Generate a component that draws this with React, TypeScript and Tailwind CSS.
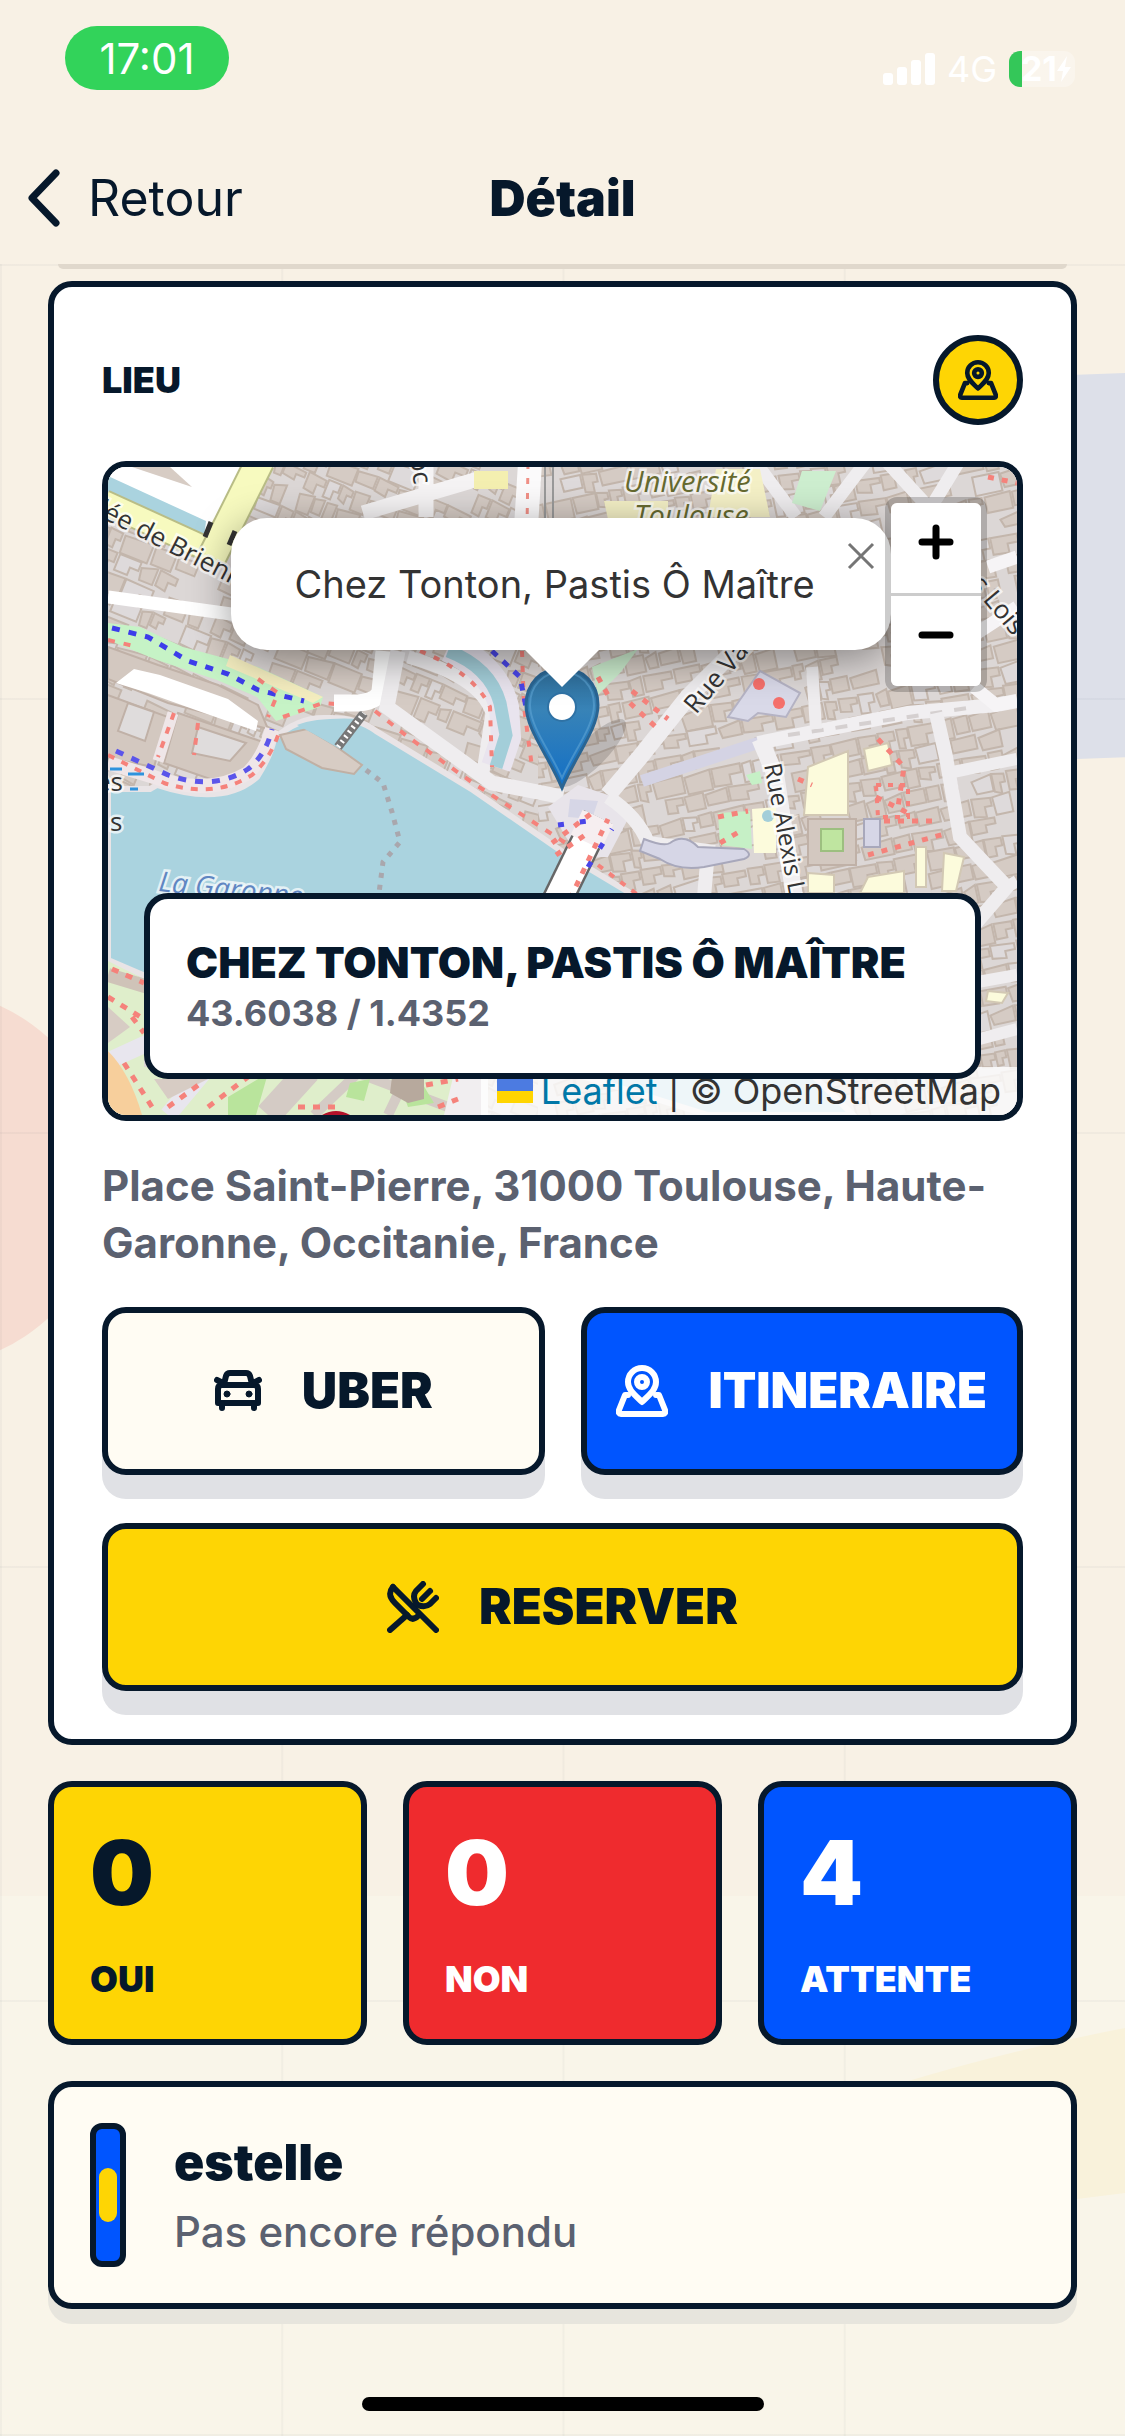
import { useState } from "react";

// Small deterministic generator, so the blocks stay the same on every render
const makeRandom = (seed: number) => () => {
  seed = (seed * 16807) % 2147483647;
  return seed / 2147483647;
};

type Block = { points: string; light: boolean };

const makeBlocks = (
  seed: number,
  x0: number,
  y0: number,
  x1: number,
  y1: number
): Block[] => {
  const rand = makeRandom(seed);
  const blocks: Block[] = [];
  for (let y = y0; y < y1; y += 21) {
    let x = x0 + rand() * 10;
    while (x < x1) {
      const w = 9 + rand() * 22;
      const h = 13 + rand() * 8;
      const cut = rand() * 5;
      if (rand() > 0.1) {
        const notch = rand() > 0.5;
        const pts = notch
          ? [
              [x, y],
              [x + w, y + cut / 2],
              [x + w, y + h / 2],
              [x + w * 0.6, y + h / 2],
              [x + w * 0.6, y + h],
              [x, y + h - cut / 2],
            ]
          : [
              [x, y + cut],
              [x + w, y],
              [x + w, y + h],
              [x + cut / 2, y + h],
            ];
        blocks.push({
          points: pts.map((p) => p.map(Math.round).join(",")).join(" "),
          light: rand() > 0.85,
        });
      }
      x += w + 1 + rand() * 2;
    }
  }
  return blocks;
};

const leftBlocks = makeBlocks(71, -60, -260, 620, 460);
const rightBlocks = makeBlocks(1234, 300, -20, 1120, 860);

const Blocks = ({ items }: { items: Block[] }) => (
  <>
    {items.map((b, i) => (
      <polygon
        key={i}
        points={b.points}
        fill={b.light ? "#dedadb" : "#d5cbc4"}
        stroke="#c3b6ac"
        strokeWidth="2"
      />
    ))}
  </>
);

const CityMap = () => (
  <svg
    viewBox="0 0 909 648"
    preserveAspectRatio="xMidYMid slice"
    className="absolute inset-0 h-full w-full"
    aria-hidden="true"
  >
    <defs>
      <clipPath id="west">
        <rect x="0" y="0" width="430" height="648" />
      </clipPath>
      <clipPath id="east">
        <rect x="430" y="0" width="479" height="648" />
      </clipPath>
      <linearGradient id="pin" x1="0" y1="0" x2="0" y2="1">
        <stop offset="0" stopColor="#2e6c97" />
        <stop offset="0.35" stopColor="#3883b7" />
        <stop offset="1" stopColor="#126fc6" />
      </linearGradient>
    </defs>

    <rect width="909" height="648" fill="#dcd7d6" />
    <g clipPath="url(#west)">
      <g transform="rotate(22)">
        <Blocks items={leftBlocks} />
      </g>
    </g>
    <g clipPath="url(#east)">
      <g transform="rotate(-12)">
        <Blocks items={rightBlocks} />
      </g>
    </g>

    {/* river */}
    <path
      d="M0 322 L42 322 L49 318 Q115 340 149 310 Q162 290 166 272 Q190 250 218 251 Q250 250 268 264 L365 323 L462 390 L522 426 L745 648 L600 648 L380 580 L35 508 L0 493 Z"
      fill="#aad3df"
      stroke="#e9e4e6"
      strokeWidth="6"
    />
    <path d="M172 268 L199 262 L226 278 L254 298 L246 307 L214 301 L178 282 Z" fill="#d7ccc4" stroke="#c0b0a4" strokeWidth="2" />
    <path d="M258 303 L275 316 L284 345 L292 375 L275 395 L271 426" stroke="#a9a7ad" strokeWidth="5" strokeDasharray="5 7" fill="none" />

    {/* north west: canal and main roads */}
    <path d="M0 0 H140 L118 62 L95 66 L0 10 Z" fill="#fff" />
    <path d="M24 0 L84 20 L62 0 Z" fill="#d7ccc4" />
    <path d="M0 9 L98 54 L96 72 L0 24 Z" fill="#aad3df" />
    <path d="M-4 35 L112 88" stroke="#b9bd86" strokeWidth="26" />
    <path d="M-4 35 L112 88" stroke="#f7fabf" strokeWidth="22" />
    <path d="M152 -6 L104 90" stroke="#b9bd86" strokeWidth="31" />
    <path d="M152 -6 L104 90" stroke="#f7fabf" strokeWidth="27" />
    <path d="M97 70 L103 55" stroke="#333" strokeWidth="5" />
    <path d="M121 78 L127 64" stroke="#333" strokeWidth="5" />
    <path d="M0 130 L130 148 L160 156" stroke="#fff" strokeWidth="13" fill="none" />
    <path d="M255 46 L370 12 M318 -6 V50" stroke="#f5f3f4" strokeWidth="15" fill="none" />
    <path d="M422 -4 L418 60" stroke="#fbfafb" strokeWidth="24" />
    <path d="M420 -4 L419 60" stroke="#f08f86" strokeWidth="3" strokeDasharray="6 9" />
    <path d="M437 0 V52 M445 0 V52" stroke="#999" strokeWidth="2" />
    <rect x="366" y="4" width="34" height="18" fill="#f4efb0" />

    {/* quay gardens */}
    <path d="M0 156 L32 160 L75 180 L150 200 L215 230 L212 240 L168 254 L149 230 L109 213 L49 193 L0 173 Z" fill="#c6f3c6" />
    <path d="M122 188 L215 230 L205 236 L118 199 Z" fill="#f5eec0" />
    <path d="M4 161 L40 170 L80 194 L120 207 L150 223 L196 234" stroke="#3d3dea" strokeWidth="5" strokeDasharray="8 9" fill="none" />
    <path d="M0 173 L30 180 M150 212 L170 226 L160 250 M175 250 L215 236 L262 240 L300 270 L365 316 L470 384" stroke="#f5827b" strokeWidth="4" strokeDasharray="7 9" fill="none" />
    <path d="M0 180 L50 198 L110 218 L150 238 L160 262 L60 236 L0 212 Z" fill="#d3c8c0" stroke="#c0b1a7" strokeWidth="2" />
    <path d="M8 216 L26 202 L52 208 L120 232 L150 254 L148 264 L96 246 L40 226 Z" fill="#fff" />
    <path d="M-6 226 L60 250 L46 300 L-6 290 Z" fill="#d3c8c0" stroke="#c0b1a7" strokeWidth="2" />
    <path d="M20 236 L46 245 L37 274 L10 264 Z" fill="#dfdcdc" stroke="#c0b1a7" strokeWidth="2" />
    <path d="M70 246 L158 276 L144 304 L108 314 L56 296 Z" fill="#d3c8c0" stroke="#c0b1a7" strokeWidth="2" />
    <path d="M90 260 L138 276 L122 294 L84 286 Z" fill="#dfdcdc" stroke="#c0b1a7" strokeWidth="2" />
    <path d="M0 296 L46 310 Q100 330 140 306 Q156 290 164 262" stroke="#efe6e8" strokeWidth="14" fill="none" />
    <path d="M8 284 L60 308 Q106 324 140 302 Q158 288 164 262" stroke="#5b55ea" strokeWidth="5" strokeDasharray="8 9" fill="none" />
    <path d="M65 246 L50 294" stroke="#efe6e8" strokeWidth="11" />
    <path d="M0 288 L56 316 Q106 332 144 308 Q164 290 172 262 M66 246 L50 290 M90 256 L86 288" stroke="#f5827b" strokeWidth="4" strokeDasharray="7 8" fill="none" />
    <path d="M2 302 H14 M20 307 H36 M22 322 H30" stroke="#2f93dd" strokeWidth="3" />

    {/* small basin and the canal branch */}
    <path d="M189 258 Q210 250 252 252 L232 282 L204 266 Z" fill="#aad3df" />
    <path d="M230 280 L256 246" stroke="#777" strokeWidth="9" />
    <path d="M230 280 L256 246" stroke="#fff" strokeWidth="5" strokeDasharray="2 4" />
    <path d="M276 184 L272 224 Q270 234 250 236 L226 236" stroke="#fff" strokeWidth="17" fill="none" />
    <path d="M290 184 L279 240 L384 316 L455 330" stroke="#efedef" strokeWidth="15" fill="none" />
    <path d="M300 190 Q372 210 384 246 L374 312" stroke="#efedef" strokeWidth="13" fill="none" />
    <path d="M340 180 Q386 200 396 240 L398 270 L388 300" stroke="#e9e4ee" strokeWidth="30" fill="none" />
    <path d="M340 184 Q382 200 392 236 L398 268 L388 300" stroke="#a3ced9" strokeWidth="13" fill="none" />
    <path d="M312 184 Q366 206 382 240 L384 300 M414 184 L416 240 L424 300" stroke="#f5827b" strokeWidth="4" strokeDasharray="6 9" fill="none" />
    <path d="M384 184 L412 210 L418 240" stroke="#4a46e8" strokeWidth="5" strokeDasharray="7 8" fill="none" />

    {/* bridge landing */}
    <path d="M440 340 L470 318 L506 330 L520 352 L500 390 L470 390 Z" fill="#e8e4ea" />
    <path d="M462 332 L490 334 L484 352 L460 350 Z" fill="#d6d6e6" />
    <path d="M448 436 L490 350" stroke="#666" strokeWidth="32" />
    <path d="M448 436 L490 350" stroke="#fff" strokeWidth="27" />
    <path d="M478 375 L490 350" stroke="#f6eef0" strokeWidth="34" />
    <path d="M444 376 L484 346 M448 388 L480 366 M462 432 L500 352" stroke="#f5827b" strokeWidth="5" strokeDasharray="6 8" />
    <path d="M480 400 L504 362 M450 358 L480 354" stroke="#4a46e8" strokeWidth="5" strokeDasharray="6 16" />
    <path d="M490 398 L530 428" stroke="#f5827b" strokeWidth="4" strokeDasharray="6 8" />

    {/* streets of the east side */}
    <path d="M500 328 L532 290 L580 230 L640 170" stroke="#efedef" strokeWidth="17" fill="none" />
    <path d="M534 314 L656 274" stroke="#d4d3e4" strokeWidth="12" />
    <path d="M650 276 L720 262 L800 246 L888 238 L909 234" stroke="#f1eff1" strokeWidth="14" fill="none" />
    <path d="M680 268 L860 241" stroke="#d5d0d0" strokeWidth="4" strokeDasharray="12 12" />
    <path d="M652 272 L668 310 L688 440" stroke="#f1eff1" strokeWidth="17" fill="none" />
    <path d="M704 200 L708 262" stroke="#efedef" strokeWidth="12" />
    <path d="M828 246 L838 290 L852 370 L899 420 L868 456" stroke="#efedef" strokeWidth="14" fill="none" />
    <path d="M840 306 L909 292 M899 420 L909 414" stroke="#efedef" strokeWidth="12" />
    <path d="M866 220 L888 238 L909 234 M866 168 L909 140 M880 100 L909 90" stroke="#f6f4f6" strokeWidth="13" fill="none" />
    <path d="M648 -4 L688 50 M757 -4 L716 50 M780 -4 L822 42 L850 -4" stroke="#efedef" strokeWidth="13" fill="none" />
    <path d="M500 330 Q530 350 540 376 L600 384 L596 430" stroke="#efedef" strokeWidth="14" fill="none" />
    <path d="M536 372 Q556 380 562 376 Q576 366 590 380 L636 382 Q646 388 636 392 L596 400 Q570 404 552 392 L532 384 Z" fill="#d6d6e6" stroke="#a8a8bb" strokeWidth="2" />
    <path d="M864 516 L909 508 M864 574 L909 562" stroke="#efedef" strokeWidth="12" />

    {/* schools, squares and gardens */}
    <path d="M608 2 H652 L662 50 H600 Z M496 34 H560 V52 H500 Z" fill="#f4f0c6" />
    <path d="M694 4 H728 L712 44 L684 36 Z" fill="#cdeecf" />
    <path d="M652 204 L692 226 L678 250 L650 246 L640 254 L620 250 Z" fill="#d9d9e8" stroke="#b5b3c4" strokeWidth="2" />
    <circle cx="651" cy="217" r="6" fill="#f5706b" />
    <circle cx="671" cy="236" r="6" fill="#f5706b" />
    <path d="M484 200 L530 182 L512 206 L490 228 Z" fill="#cdeecf" />
    <path d="M700 300 L740 284 V348 H696 Z M756 282 L780 276 L784 298 L760 304 Z M760 410 L796 404 V426 H752 Z M700 406 L726 408 V426 H700 Z M808 380 H818 V420 H808 Z M836 386 L856 390 L848 424 H834 Z M880 524 L900 526 L894 536 L878 534 Z" fill="#fcfbdc" stroke="#d2c8b4" strokeWidth="2" />
    <path d="M644 342 L668 340 V386 H646 Z" fill="#fcfbdc" />
    <path d="M610 346 L642 344 L644 382 L612 378 Z" fill="#c6f0c6" />
    <path d="M700 352 H748 V398 H700 Z" fill="#d3c8c0" stroke="#c0b1a7" strokeWidth="2" />
    <rect x="713" y="362" width="22" height="22" fill="#bfe5a0" stroke="#9dbf80" strokeWidth="2" />
    <rect x="756" y="352" width="16" height="28" fill="#d6d6e6" stroke="#a8a8bb" strokeWidth="2" />
    <circle cx="660" cy="349" r="6" fill="#a3ced9" />
    <path d="M638 308 L652 304 L654 316 L644 318 Z" fill="#c6f0c6" />
    <path d="M490 210 L502 232 M524 224 L560 252 M522 236 L550 262 M610 350 L640 344 M612 376 L636 362 M770 272 L796 300 L790 340 M768 330 L800 346 M760 388 L840 366 M776 354 L830 354 M880 10 L909 16 M690 312 L704 318" stroke="#f5827b" strokeWidth="5" strokeDasharray="6 8" fill="none" />
    <path d="M768 318 H800 V350 H770 Z" fill="none" stroke="#f5827b" strokeWidth="4" strokeDasharray="5 7" />

    {/* south west gardens */}
    <path d="M0 494 L36 512 V600 H380 V648 H0 Z" fill="#dfeecb" />
    <path d="M0 508 L40 520" stroke="#cfc3b8" strokeWidth="14" />
    <path d="M0 594 L44 574 L90 612 L60 648" stroke="#e8e6ee" strokeWidth="17" fill="none" />
    <path d="M0 584 Q22 606 34 648 H0 Z" fill="#f7cf9c" />
    <path d="M0 540 L22 560 L0 576 Z M46 612 H100 L60 632 Z" fill="#d7ccc4" />
    <path d="M160 648 L200 604" stroke="#d4cbc5" strokeWidth="26" />
    <path d="M206 648 L250 606 L340 640 M300 606 L280 648" stroke="#d4cbc5" strokeWidth="10" fill="none" />
    <path d="M242 616 L262 612 L256 634 L238 630 Z M292 618 L314 616 L326 636 L300 640 Z M120 630 L160 606 L148 648 H120 Z" fill="#b9e49c" />
    <path d="M284 610 H316 V632 L300 636 L282 626 Z" fill="#b7a99d" />
    <path d="M346 606 H380 V648 H336 Z" fill="#f1eef0" />
    <path d="M4 502 L36 516 M0 530 L36 552 M24 550 L36 566 M16 596 L44 640 M60 640 L96 614 M100 640 L140 610 M190 640 L230 640 M318 618 L350 612 M330 640 L350 632" stroke="#f5827b" strokeWidth="5" strokeDasharray="7 8" fill="none" />
    <path d="M214 648 Q228 640 242 648 Z" fill="#b3122a" />

    <g fontFamily="'Open Sans', 'Noto Sans', sans-serif" fontSize="26" fontWeight="500" stroke="#fff" strokeWidth="5" strokeOpacity="0.7" paintOrder="stroke" fill="#333">
      <text transform="translate(-12 48) rotate(27)">lée de Brienne</text>
      <text transform="translate(588 248) rotate(-50)">Rue Valade</text>
      <text transform="translate(656 298) rotate(79)" fontSize="24">Rue Alexis Larrey</text>
      <text transform="translate(862 118) rotate(50)">s Lois</text>
      <text transform="translate(302 -10) rotate(82)">oc</text>
      <text x="-12" y="324">es</text>
      <text x="2" y="364">s</text>
      <g fontStyle="italic">
        <text x="516" y="25" fontSize="29" fill="#666a30">Université</text>
        <text x="526" y="59" fontSize="29" fill="#666a30">Toulouse</text>
        <text transform="translate(50 424) rotate(6)" fontSize="28" fill="#5f86c2">La Garonne</text>
      </g>
    </g>

    {/* marker and its shadow */}
    <ellipse cx="484" cy="286" rx="46" ry="14" transform="rotate(-45 484 286)" fill="#000" opacity="0.15" />
    <path
      d="M454 201 C433 201 418 217 418 238 C418 262 440 288 454 321 C468 288 490 262 490 238 C490 217 475 201 454 201 Z"
      fill="url(#pin)"
      stroke="#2a6593"
      strokeWidth="3"
    />
    <path
      d="M454 205 C435 205 422 219 422 238 C422 259 442 284 454 311 C466 284 486 259 486 238 C486 219 473 205 454 205 Z"
      fill="none"
      stroke="#5ea3d4"
      strokeWidth="2"
      opacity="0.6"
    />
    <circle cx="454" cy="240" r="14" fill="#fff" stroke="#2f72a5" strokeWidth="2" />
  </svg>
);

const MapPinIcon = ({ className }: { className: string }) => (
  <svg viewBox="0 0 52 52" className={className} fill="none" stroke="currentColor" strokeLinejoin="round" strokeLinecap="round" aria-hidden="true">
    <path d="M26 37 C19 30 12 25 12 17 A14 14 0 0 1 40 17 C40 25 33 30 26 37 Z" strokeWidth="6" />
    <circle cx="26" cy="17" r="5" strokeWidth="6" />
    <path d="M12 30 H9 L3 45 Q2 49 5 49 H47 Q50 49 49 45 L43 30 H40" strokeWidth="6" />
  </svg>
);

const CarIcon = ({ className }: { className: string }) => (
  <svg viewBox="0 0 48 42" className={className} fill="none" stroke="currentColor" strokeLinejoin="round" strokeLinecap="round" aria-hidden="true">
    <path d="M10 14 L12 6 Q13 3 16 3 H32 Q35 3 36 6 L38 14" strokeWidth="6" />
    <path d="M8 15 H40 Q44 15 44 19 V33 H4 V19 Q4 15 8 15 Z" strokeWidth="6" />
    <path d="M3 10 L7 12 M45 10 L41 12 M8 34 V38 M40 34 V38" strokeWidth="6" />
    <circle cx="13" cy="24" r="3" fill="currentColor" stroke="currentColor" />
    <circle cx="35" cy="24" r="3" fill="currentColor" stroke="currentColor" />
  </svg>
);

const RestaurantIcon = ({ className }: { className: string }) => (
  <svg viewBox="0 0 52 52" className={className} fill="none" stroke="currentColor" strokeWidth="6" strokeLinejoin="round" strokeLinecap="round" aria-hidden="true">
    <path d="M6 6 L49 49" />
    <path d="M6 6 C1 12 3 17 8 22 L22 36 Q26 40 31 35" />
    <path d="M20 34 L3 49" />
    <path d="M36 3 L29 10 Q25 15 29 22 L31 24 Q38 27 43 23 L49 17" />
    <path d="M43 10 L35 18" />
  </svg>
);

const StatusBar = () => (
  <div className="flex h-[132px] items-start justify-between pt-[26px] pr-[50px] pl-[65px]">
    <span className="flex h-16 w-[164px] items-center justify-center rounded-full bg-[#32d35a] text-[42px] text-white">
      17:01
    </span>
    <div className="flex h-[86px] items-center gap-3 text-[36px] text-white">
      <div className="flex items-end gap-1">
        <i className="h-3 w-[10px] rounded-[3px] bg-white" />
        <i className="h-[18px] w-[10px] rounded-[3px] bg-white" />
        <i className="h-[25px] w-[10px] rounded-[3px] bg-white" />
        <i className="h-8 w-[10px] rounded-[3px] bg-white" />
      </div>
      <span>4G</span>
      <div className="flex h-9 w-[66px] items-center justify-end rounded-[11px] bg-linear-to-r from-[#34c759] from-20% to-white/30 to-20% pr-1 text-[34px] leading-9 font-bold">
        21
        <svg viewBox="0 0 14 26" className="h-[26px] w-[14px]" fill="currentColor" aria-hidden="true">
          <path d="M10 0 L0 15 H6 L4 26 L14 11 H8 Z" />
        </svg>
      </div>
    </div>
  </div>
);

const stats = [
  { label: "OUI", value: 0, style: "bg-[#fed504] text-[#06182b]" },
  { label: "NON", value: 0, style: "bg-[#ef2b2e] text-white" },
  { label: "ATTENTE", value: 4, style: "bg-[#0055ff] text-white" },
];

const actionStyle =
  "flex h-[168px] items-center justify-center gap-[40px] rounded-3xl border-6 border-[#06182b] text-[49px] font-black shadow-[0_24px_0_#e0e1e5]";

const App = () => {
  const [popupOpen, setPopupOpen] = useState(true);

  return (
    <div className="relative flex min-h-screen flex-col overflow-hidden bg-[#f8f1e5] font-[Inter,'Liberation_Sans',sans-serif] text-[#06182b]">
      {/* backdrop: faint grid and large pale shapes */}
      <div className="absolute inset-x-0 top-[264px] bottom-0" aria-hidden="true">
        <div className="absolute top-[112px] -right-20 h-[384px] w-[320px] -rotate-2 bg-[#dde0e9]" />
        <div className="absolute top-[724px] -left-[270px] size-[380px] rounded-full bg-[#f6dcd1]" />
        <div className="absolute inset-x-0 bottom-0 h-[540px] bg-[#f9f5e9]" />
        <svg viewBox="0 0 260 190" className="absolute right-0 bottom-[225px] h-[190px] w-[260px]">
          <path d="M30 64 Q140 30 260 7 V172 L212 178 L80 190 Z" fill="#f9f2db" />
        </svg>
        <div className="absolute inset-0 bg-[linear-gradient(to_right,#06182b08_2px,transparent_2px),linear-gradient(to_bottom,#06182b08_2px,transparent_2px)] bg-size-[25%_434px]" />
      </div>

      <header className="relative h-[264px]">
        <StatusBar />
        <nav className="grid h-[132px] grid-cols-3 items-center px-7 text-[50px]">
          <button className="flex items-center gap-7">
            <svg viewBox="0 0 32 58" className="h-[58px] w-8" fill="none" stroke="currentColor" strokeWidth="7" strokeLinecap="round" strokeLinejoin="round" aria-hidden="true">
              <path d="M28 4 L4 29 L28 54" />
            </svg>
            Retour
          </button>
          <h1 className="text-center font-black">Détail</h1>
        </nav>
      </header>

      <main className="relative flex flex-col gap-9 px-12">
        {/* end of the card scrolled under the header */}
        <div className="mx-[10px] -mb-6 h-[5px] rounded-b-md bg-[#e0d8cc]" />

        <section className="rounded-3xl border-6 border-[#06182b] bg-white p-12">
          <div className="flex items-center justify-between">
            <h2 className="text-[36px] font-black">LIEU</h2>
            <div className="flex size-[90px] items-center justify-center rounded-full border-6 border-[#06182b] bg-[#fed504]">
              <MapPinIcon className="size-10" />
            </div>
          </div>

          <div className="relative mt-9 h-[660px] overflow-hidden rounded-3xl border-6 border-[#06182b]">
            <CityMap />

            {popupOpen && (
              <div className="absolute top-[51px] left-1/2 -ml-[332px] flex h-[132px] w-[660px] items-center rounded-[36px] bg-white pl-16 text-[38px] text-[#333] shadow-[0_9px_42px_rgba(0,0,0,0.4)]">
                Chez Tonton, Pastis Ô Maître
                <button
                  onClick={() => setPopupOpen(false)}
                  aria-label="Fermer"
                  className="absolute top-6 right-4 text-[#757575]"
                >
                  <svg viewBox="0 0 28 28" className="size-7" stroke="currentColor" strokeWidth="3" aria-hidden="true">
                    <path d="M2 2 L26 26 M26 2 L2 26" />
                  </svg>
                </button>
                <svg viewBox="0 0 74 37" className="absolute top-full left-1/2 -ml-9 h-[37px] w-[74px]" aria-hidden="true">
                  <path d="M0 0 H74 L37 37 Z" fill="#fff" />
                </svg>
              </div>
            )}

            <div className="absolute top-[30px] right-[30px] rounded-xl border-6 border-black/20 bg-clip-padding">
              <button aria-label="Zoom avant" className="flex size-[90px] items-center justify-center rounded-t-md bg-white pb-3">
                <svg viewBox="0 0 36 36" className="size-9" stroke="#000" strokeWidth="7" strokeLinecap="round" aria-hidden="true">
                  <path d="M4 18 H32 M18 4 V32" />
                </svg>
              </button>
              <div className="h-[3px] bg-[#ccc]" />
              <button aria-label="Zoom arrière" className="flex size-[90px] items-center justify-center rounded-b-md bg-white pb-3">
                <svg viewBox="0 0 36 36" className="size-9" stroke="#000" strokeWidth="7" strokeLinecap="round" aria-hidden="true">
                  <path d="M4 18 H32" />
                </svg>
              </button>
            </div>

            <div className="absolute right-0 bottom-0 flex h-12 items-center gap-2 bg-white/80 px-4 text-[36px] text-[#333]">
              <svg viewBox="0 0 36 24" className="h-6 w-9" aria-hidden="true">
                <rect width="36" height="12" fill="#4c7be1" />
                <rect y="12" width="36" height="12" fill="#ffd500" />
              </svg>
              <span>
                <a href="#leaflet" className="text-[#0078a8]">
                  Leaflet
                </a>{" "}
                | © OpenStreetMap
              </span>
            </div>

            <div className="absolute inset-x-9 bottom-9 rounded-3xl border-6 border-[#06182b] bg-white p-9">
              <p className="text-[43px] leading-[54px] font-black whitespace-nowrap">
                CHEZ TONTON, PASTIS Ô MAÎTRE
              </p>
              <p className="text-[36px] leading-[48px] font-bold text-[#5b6170]">
                43.6038 / 1.4352
              </p>
            </div>
          </div>

          <p className="mt-9 text-[42px] leading-[57px] font-bold text-[#5b6170]">
            Place Saint-Pierre, 31000 Toulouse, Haute-Garonne, Occitanie, France
          </p>

          <div className="mt-9 grid grid-cols-2 gap-x-9 gap-y-12">
            <button className={`${actionStyle} bg-[#fffcf3]`}>
              <CarIcon className="h-[42px] w-12" />
              UBER
            </button>
            <button className={`${actionStyle} bg-[#0055ff] text-white`}>
              <MapPinIcon className="size-[52px]" />
              ITINERAIRE
            </button>
            <button className={`${actionStyle} col-span-2 bg-[#fed504]`}>
              <RestaurantIcon className="size-[52px]" />
              RESERVER
            </button>
          </div>
        </section>

        <section className="grid grid-cols-3 gap-9">
          {stats.map((stat) => (
            <div
              key={stat.label}
              className={`flex h-[264px] flex-col justify-between rounded-3xl border-6 border-[#06182b] p-9 ${stat.style}`}
            >
              <div className="text-[90px] leading-[100px] font-black">{stat.value}</div>
              <div className="text-[36px] leading-[48px] font-black">{stat.label}</div>
            </div>
          ))}
        </section>

        <section className="flex items-center gap-12 rounded-3xl border-6 border-[#06182b] bg-[#fffcf3] p-9 shadow-[0_15px_0_#e7e5dd]">
          <div className="flex h-36 w-9 items-center justify-center rounded-xl border-6 border-[#06182b] bg-[#0055ff]">
            <div className="h-[54px] w-[18px] rounded-full bg-[#fed504]" />
          </div>
          <div className="pt-1">
            <h3 className="text-[50px] leading-[70px] font-black">estelle</h3>
            <p className="text-[42px] leading-[70px] font-medium text-[#5b6170]">
              Pas encore répondu
            </p>
          </div>
        </section>
      </main>

      <div className="relative mx-auto mt-auto mb-[25px] h-[14px] w-[402px] rounded-full bg-black" />
    </div>
  );
};

export default App;
